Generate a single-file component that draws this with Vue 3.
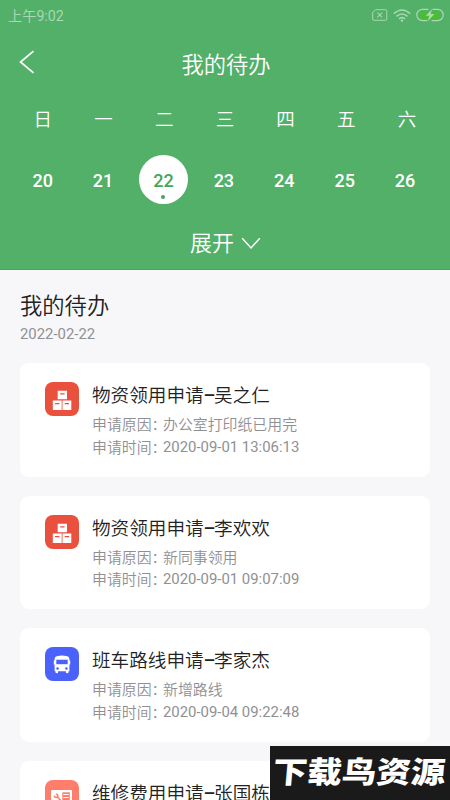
<template>
  <div class="page">
    <header class="header">
      <div class="status">
        <span class="clock">上午9:02</span>
        <div class="status-icons">
          <svg width="16" height="12" viewBox="0 0 16 12" fill="none" stroke="currentColor">
            <path d="M3.5.7H13.6Q14.8.7 14.8 1.9V10.1Q14.8 11.3 13.6 11.3H1.9Q.7 11.3.7 10.1V3.5Z" />
            <path d="M5.4 3.6l4.8 4.8M10.2 3.6L5.4 8.4" stroke-width="1.1" />
          </svg>
          <svg class="wifi" width="18" height="13" viewBox="0 0 18 13" fill="none" stroke="currentColor" stroke-width="1.5">
            <path d="M.8 4.6Q9-2.7 17.2 4.6M3.5 7.4Q9 2.6 14.5 7.4M6 9.9Q9 7.3 12 9.9" />
            <circle cx="9" cy="11.6" r="1.2" fill="currentColor" stroke="none" />
          </svg>
          <svg class="battery" width="28" height="14" viewBox="0 0 28 14">
            <rect x="4" y="3" width="20" height="8" rx="3" fill="#4cbc35" />
            <path
              d="M12.4 1.4H6.4a5.6 5.6 0 0 0 0 11.2h5M16.5 1.4h5.1a5.6 5.6 0 0 1 0 11.2h-6"
              fill="none"
              stroke="currentColor"
              stroke-width="1.2"
            />
            <path d="M16 .9L9.7 7.7h3.5l-1.3 5.5 6.5-7.1h-3.7Z" fill="currentColor" />
          </svg>
        </div>
      </div>

      <div class="navbar">
        <svg class="back" width="16" height="24" viewBox="0 0 16 24" fill="none" stroke="#fff" stroke-width="1.7">
          <path d="M14.5 1.2L1.5 12l13 10.8" />
        </svg>
        <h1>我的待办</h1>
      </div>

      <div class="week names">
        <span v-for="name in weekNames" :key="name">{{ name }}</span>
      </div>
      <div class="week days">
        <span v-for="day in days" :key="day" class="day" :class="{ active: day === selected }">{{ day }}</span>
      </div>

      <div class="expand">
        <span>展开</span>
        <svg width="20" height="13" viewBox="0 0 20 13" fill="none" stroke="#fff" stroke-width="1.5">
          <path d="M1.2 1.3L10 11l8.8-9.7" />
        </svg>
      </div>
    </header>

    <main class="content">
      <h2>我的待办</h2>
      <p class="date">2022-02-22</p>

      <article v-for="item in items" :key="item.name" class="card">
        <div class="icon" :class="item.kind">
          <svg v-if="item.kind === 'goods'" width="34" height="34" viewBox="0 0 34 34">
            <path fill="#fff" d="M12.7 8.7H22V17.2h-9.3zM7.8 18.5h8.9V28H7.8zM17.5 18.5h8.8V28h-8.8z" />
            <path fill="#e9513e" d="M15.2 11.3h4.4v1.2h-4.4zM10 21h4.4v1.2H10zM19.7 21h4.3v1.2h-4.3z" />
          </svg>
          <svg v-else-if="item.kind === 'bus'" width="34" height="34" viewBox="0 0 34 34">
            <path
              fill="#fff"
              d="M12.5 9Q17 8.2 21.5 9 24.4 9.6 24.4 12.3V13.5h.8v4h-.8v6.8h-.9v1q0 1-1.3 1t-1.3-1v-1h-7.8v1q0 1-1.3 1t-1.3-1v-1h-.9v-6.8h-.8v-4h.8v-1.2Q9.6 9.6 12.5 9Z"
            />
            <path fill="#4a62fb" d="M11.3 12.7h11.4v4.5H11.3z" />
            <circle cx="12.6" cy="21.5" r="1.3" fill="#4a62fb" />
            <circle cx="21.4" cy="21.5" r="1.3" fill="#4a62fb" />
          </svg>
          <svg v-else width="34" height="34" viewBox="0 0 34 34">
            <rect x="6" y="10" width="21" height="16" rx="1" fill="#fff" />
            <path d="M17.3 12.3h7.5v11.5h-7.5z" fill="#ff7e6b" />
            <path d="M18.3 14.5h5.5M18.3 17.5h5.5M18.3 20.5h5.5" stroke="#fff" stroke-width="1.2" />
            <path
              d="M9.2 15.6q.4 2.2 2.2 1.8 1.9-.4 1.3-2.2-.3-1-1.5-1.2M12.2 16.8l3.4 3.4"
              fill="none"
              stroke="#ff7e6b"
              stroke-width="1.6"
            />
          </svg>
        </div>
        <div class="info">
          <h3>{{ item.type }}<span class="dash">–</span>{{ item.name }}</h3>
          <p><span class="label">申请原因：</span>{{ item.reason }}</p>
          <p><span class="label">申请时间：</span><span class="time">{{ item.time }}</span></p>
        </div>
      </article>
    </main>

    <div class="watermark"><span>下载鸟资源</span></div>
  </div>
</template>

<script setup>
import { ref } from "vue";

const weekNames = ["日", "一", "二", "三", "四", "五", "六"];
const days = [20, 21, 22, 23, 24, 25, 26];
const selected = ref(22);

const items = [
  { kind: "goods", type: "物资领用申请", name: "吴之仁", reason: "办公室打印纸已用完", time: "2020-09-01 13:06:13" },
  { kind: "goods", type: "物资领用申请", name: "李欢欢", reason: "新同事领用", time: "2020-09-01 09:07:09" },
  { kind: "bus", type: "班车路线申请", name: "李家杰", reason: "新增路线", time: "2020-09-04 09:22:48" },
  { kind: "repair", type: "维修费用申请", name: "张国栋", reason: "设备维修", time: "2020-09-04 10:15:20" },
];
</script>

<style>
body {
  margin: 0;
  overflow: hidden;
}
</style>

<style scoped>
.page {
  position: relative;
  width: 450px;
  height: 800px;
  overflow: hidden;
  background: #f7f7fa;
  font-family: Roboto, "Noto Sans CJK SC", sans-serif;
  font-weight: 350;
}
h1,
h2,
h3,
p {
  margin: 0;
  font-weight: 350;
}
svg {
  display: block;
}
.header {
  height: 270px;
  box-sizing: border-box;
  border-bottom: 1px solid #47a65e;
  background: #52b069;
  color: #fff;
}
.status {
  display: flex;
  justify-content: space-between;
  align-items: center;
  height: 30px;
  padding: 0 6px 0 8px;
  color: #a9d8b4;
}
.clock {
  font-size: 14.2px;
  font-weight: 400;
  line-height: 30px;
  padding-top: 2px;
}
.status-icons {
  display: flex;
  align-items: center;
}
.wifi {
  margin-left: 5px;
}
.battery {
  margin-left: 5px;
}
.navbar {
  display: grid;
  grid-template-columns: 60px 1fr 60px;
  align-items: center;
  height: 66px;
}
.back {
  margin: -3px 0 0 19px;
}
h1 {
  padding: 3px 0 0 2px;
  font-size: 22.3px;
  line-height: 30px;
  text-align: center;
}
.week {
  display: grid;
  grid-template-columns: repeat(7, 60.7px);
  justify-items: center;
  align-items: center;
  padding-left: 12.5px;
}
.names {
  height: 43px;
  padding-bottom: 2px;
  font-size: 18.5px;
}
.days {
  grid-template-columns: repeat(7, 60.4px);
  height: 76px;
}
.day {
  position: relative;
  width: 49px;
  height: 49px;
  border-radius: 50%;
  font-size: 18px;
  font-weight: 500;
  line-height: 51px;
  text-align: center;
}
.day.active {
  background: #fff;
  color: #42a65c;
}
.day.active::after {
  content: "";
  position: absolute;
  left: 22.5px;
  bottom: 5px;
  width: 4px;
  height: 4px;
  border-radius: 50%;
  background: #42a65c;
}
.expand {
  display: flex;
  justify-content: center;
  align-items: center;
  gap: 7px;
  height: 48px;
  padding-left: 1px;
  font-size: 22px;
}
.expand svg {
  margin-top: 4px;
}
.content {
  padding: 21px 20px 0;
}
h2 {
  color: #222;
  font-size: 22.3px;
  line-height: 30px;
}
.date {
  margin: 4px 0 20px;
  color: #909093;
  font-size: 14.9px;
  font-weight: 400;
  line-height: 18px;
}
.card {
  display: flex;
  gap: 13px;
  height: 113.6px;
  margin-bottom: 19px;
  padding: 19px 25px 0;
  box-sizing: border-box;
  border-radius: 9px;
  background: #fff;
}
.icon {
  width: 34px;
  height: 34px;
  border-radius: 8px;
  flex: none;
}
.goods {
  background: #e9513e;
}
.bus {
  background: #4a62fb;
}
.repair {
  background: #ff7e6b;
}
.info {
  white-space: nowrap;
}
h3 {
  height: 32px;
  color: #222;
  font-size: 18.6px;
  line-height: 29px;
}
.dash {
  display: inline-block;
  width: 10.5px;
  font-weight: 500;
  text-align: center;
}
.info p {
  display: flex;
  height: 22.5px;
  color: #909093;
  font-size: 14.9px;
  line-height: 22px;
}
.label {
  width: 71px;
}
.time {
  font-weight: 400;
  line-height: 21px;
}
.watermark {
  position: absolute;
  right: 0;
  bottom: 0;
  display: flex;
  justify-content: center;
  align-items: center;
  width: 180px;
  height: 54px;
  background: #1a1a1a;
  color: #fff;
  font-size: 34.5px;
  font-weight: 900;
  line-height: 54px;
  white-space: nowrap;
}
.watermark span {
  transform: translateX(-1px) skewX(-5deg) scaleY(0.87);
}
</style>
